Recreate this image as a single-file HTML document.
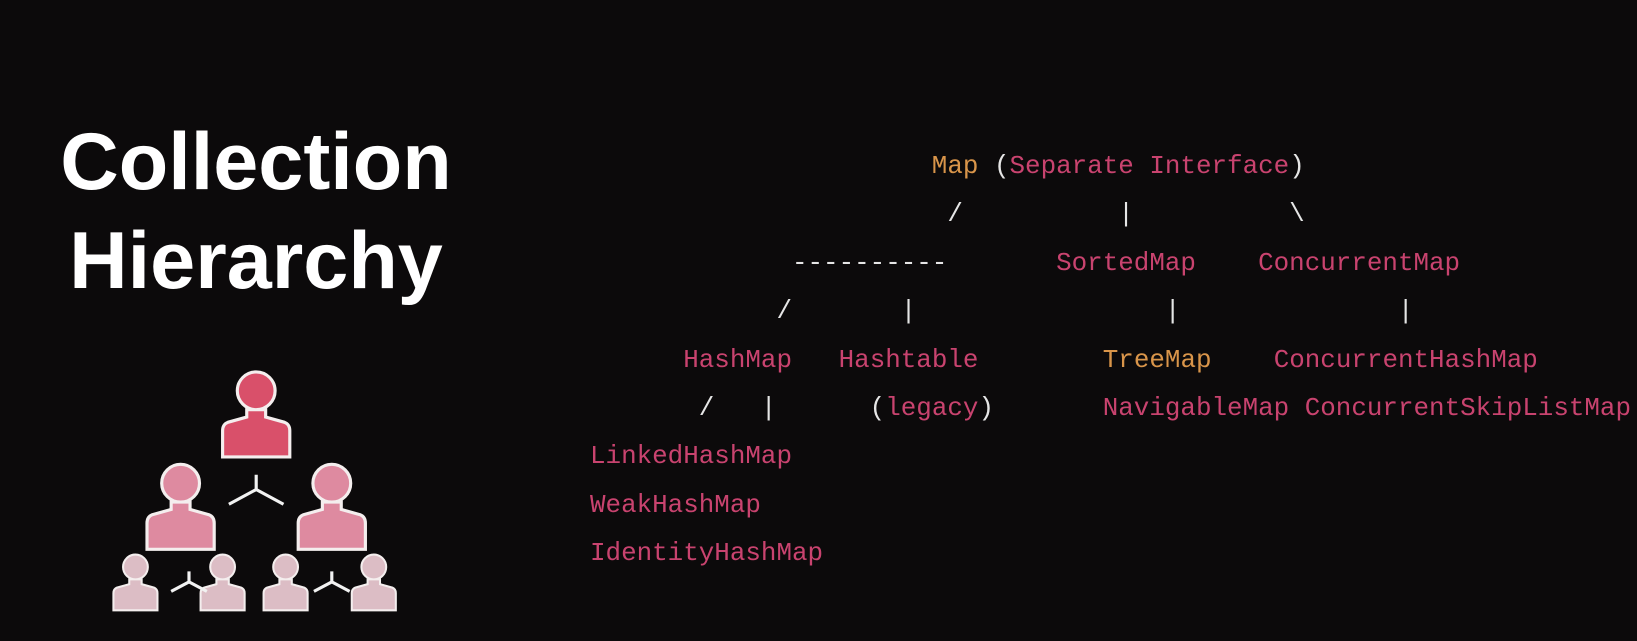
<!DOCTYPE html>
<html><head><meta charset="utf-8"><style>
body{margin:0;width:1637px;height:641px;background:#0c0a0b;overflow:hidden;position:relative;font-family:"Liberation Sans",sans-serif}
.t{position:absolute;left:0;width:512px;text-align:center;color:#fff;font-weight:bold;font-size:81px;line-height:100px}
pre{position:absolute;left:590px;top:142px;margin:0;font-family:"Liberation Mono",monospace;font-size:25.9px;line-height:48.4px;color:#e6e6e6}
.p{color:#c9436f}.o{color:#d9954a}
</style></head><body>
<div class="t" style="top:112px">Collection</div>
<div class="t" style="top:211px">Hierarchy</div>
<svg width="512" height="641" style="position:absolute;left:0;top:0">
<defs>
<symbol id="person" viewBox="0 0 70 90"><path d="M35 3a18 18 0 1 1 0 36a18 18 0 1 1 0-36zM26 39v7l-18 5q-5 2-5 8v25h64v-25q0-6-5-8l-18-5v-7z" stroke="#f4eeee" stroke-width="3"/></symbol>
</defs>
<g transform="translate(0,-4) scale(1.05)">
<g fill="#d9506a"><use href="#person" x="209" y="355" width="70" height="90"/></g>
<g fill="#de8aa0"><use href="#person" x="137" y="443" width="70" height="90"/><use href="#person" x="281" y="443" width="70" height="90"/></g>
<g fill="#dcbdc5">
<use href="#person" x="106" y="530" width="46" height="59"/><use href="#person" x="189" y="530" width="46" height="59"/>
<use href="#person" x="249" y="530" width="46" height="59"/><use href="#person" x="333" y="530" width="46" height="59"/></g>
<g stroke="#f2f2f2" stroke-width="3" fill="none">
<path d="M244 456v14l-26 14M244 470l26 14"/>
<path d="M180 548v10l-17 9M180 558l17 9"/>
<path d="M316 548v10l-17 9M316 558l17 9"/>
</g>
</g>
</svg>
<pre><span class="o">                      Map</span> (<span class="p">Separate Interface</span>)
                       /          |          \
             ----------       <span class="p">SortedMap</span>    <span class="p">ConcurrentMap</span>
            /       |                |              |
      <span class="p">HashMap</span>   <span class="p">Hashtable</span>        <span class="o">TreeMap</span>    <span class="p">ConcurrentHashMap</span>
       /   |      (<span class="p">legacy</span>)       <span class="p">NavigableMap</span> <span class="p">ConcurrentSkipListMap</span>
<span class="p">LinkedHashMap</span>
<span class="p">WeakHashMap</span>
<span class="p">IdentityHashMap</span></pre>
</body></html>
